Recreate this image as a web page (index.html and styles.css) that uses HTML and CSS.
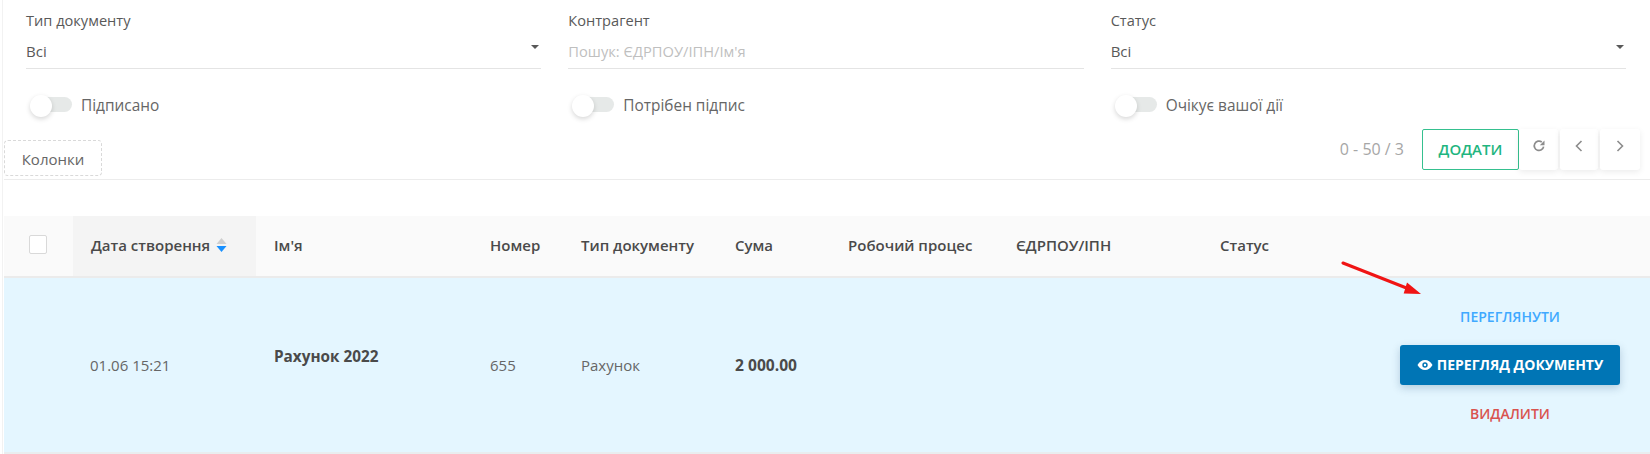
FILE: index.html
```html
<!DOCTYPE html>
<html lang="uk">
<head>
<meta charset="utf-8">
<title>Документи</title>
<link rel="stylesheet" href="styles.css">
</head>
<body>
<main class="page">
  <section class="filters">
    <div class="field">
      <div class="field-label">Тип документу</div>
      <div class="field-control"><span>Всі</span><span class="caret"></span></div>
      <div class="toggle-row"><span class="toggle"><span class="knob"></span></span><span class="toggle-text">Підписано</span></div>
    </div>
    <div class="field">
      <div class="field-label">Контрагент</div>
      <div class="field-control placeholder"><span>Пошук: ЄДРПОУ/ІПН/Ім'я</span></div>
      <div class="toggle-row"><span class="toggle"><span class="knob"></span></span><span class="toggle-text">Потрібен підпис</span></div>
    </div>
    <div class="field">
      <div class="field-label">Статус</div>
      <div class="field-control"><span>Всі</span><span class="caret"></span></div>
      <div class="toggle-row"><span class="toggle"><span class="knob"></span></span><span class="toggle-text">Очікує вашої дії</span></div>
    </div>
  </section>

  <section class="toolbar">
    <button class="columns-btn">Колонки</button>
    <div class="toolbar-right">
      <span class="range">0 - 50 / 3</span>
      <button class="add-btn">ДОДАТИ</button>
      <button class="icon-btn icon-btn-first" aria-label="Оновити">
        <svg width="14" height="14" viewBox="0 0 14 14"><path d="M11.6 7.6A4.7 4.7 0 1 1 9.8 3" fill="none" stroke="#8c8c8c" stroke-width="1.7"/><path d="M12.500 1.500v4.700H7.800z" fill="#8c8c8c"/></svg>
      </button>
      <button class="icon-btn icon-btn-mid" aria-label="Назад">
        <svg width="10" height="14" viewBox="0 0 10 14"><path d="M7.5 2 2.5 7l5 5" fill="none" stroke="#8c8c8c" stroke-width="1.6"/></svg>
      </button>
      <button class="icon-btn icon-btn-last" aria-label="Вперед">
        <svg width="10" height="14" viewBox="0 0 10 14"><path d="M2.5 2l5 5-5 5" fill="none" stroke="#8c8c8c" stroke-width="1.6"/></svg>
      </button>
    </div>
  </section>

  <table class="docs">
    <colgroup>
      <col class="c-check"><col class="c-date"><col class="c-name"><col class="c-num"><col class="c-type"><col class="c-sum"><col class="c-flow"><col class="c-code"><col class="c-status"><col class="c-actions">
    </colgroup>
    <thead>
      <tr>
        <th class="check-cell"><span class="checkbox"></span></th>
        <th class="sorted"><span class="sort-head">Дата створення
          <svg class="sort-icon" width="11" height="16" viewBox="0 0 11 16"><path d="M5.500 1l5 6H.5z" fill="#cfcfcf"/><path d="M5.500 15 .5 9h10z" fill="#1890ff"/></svg>
        </span></th>
        <th>Ім'я</th>
        <th>Номер</th>
        <th>Тип документу</th>
        <th>Сума</th>
        <th>Робочий процес</th>
        <th>ЄДРПОУ/ІПН</th>
        <th>Статус</th>
        <th></th>
      </tr>
    </thead>
    <tbody>
      <tr>
        <td></td>
        <td class="date-cell">01.06 15:21</td>
        <td class="strong name-cell">Рахунок 2022</td>
        <td>655</td>
        <td>Рахунок</td>
        <td class="strong sum-cell">2 000.00</td>
        <td></td>
        <td></td>
        <td></td>
        <td class="actions">
          <div class="actions-stack">
            <a class="link link-view">ПЕРЕГЛЯНУТИ</a>
            <button class="primary-btn">
              <svg width="16" height="12" viewBox="0 0 16 12"><path d="M0.5 6C2.5 2.6 5 1 8 1s5.500 1.600 7.500 5c-2 3.400-4.500 5-7.500 5S2.500 9.400.5 6z" fill="#fff"/><circle cx="8" cy="6" r="2.700" fill="#0075b5"/><circle cx="8" cy="6" r="1.200" fill="#fff"/></svg>
              ПЕРЕГЛЯД ДОКУМЕНТУ
            </button>
            <a class="link link-del">ВИДАЛИТИ</a>
          </div>
        </td>
      </tr>
    </tbody>
  </table>

  <svg class="arrow" width="84" height="38" viewBox="0 0 84 38"><path d="M2 3 68 29" stroke="#f01414" stroke-width="3" stroke-linecap="round" fill="none"/><path d="M80 34 62.700 33.500 66 22.500z" fill="#f01414"/></svg>
</main>
</body>
</html>
```
FILE: styles.css
```css
* { box-sizing: border-box; }
html, body { margin: 0; padding: 0; }
body {
  background: #fff;
  color: #666;
  font-family: "Open Sans", "Noto Sans", sans-serif;
  font-size: 15px;
  line-height: 20px;
  height: 454px;
  overflow: hidden;
}
button { font-family: inherit; cursor: pointer; }

.page {
  position: relative;
  margin-left: 2px;
  padding-left: 1px;
  height: 454px;
  border-left: 1px solid #f2f2f2;
}

.filters {
  display: grid;
  grid-template-columns: repeat(3, 1fr);
  column-gap: 27px;
  padding: 10px 24px 0 22px;
}
.field-label { height: 20px; color: #595959; font-size: 14.6px; }
.field-control {
  display: flex;
  justify-content: space-between;
  align-items: center;
  height: 39px;
  padding-top: 4px;
  border-bottom: 1px solid #e4e4e4;
  color: #595959;
}
.field-control.placeholder { color: #bfbfbf; font-size: 14.7px; }
.caret {
  width: 0;
  height: 0;
  margin: 0 2px 8px 0;
  border-left: 4px solid transparent;
  border-right: 4px solid transparent;
  border-top: 4px solid #595959;
}
.toggle-row {
  display: flex;
  align-items: center;
  gap: 9px;
  height: 24px;
  margin-top: 23px;
  padding-left: 10px;
  font-size: 15.400px;
}
.toggle-text { padding-top: 3px; }
.toggle {
  position: relative;
  display: block;
  width: 36px;
  height: 15px;
  border-radius: 8px;
  background: #e6e9e8;
}
.knob {
  position: absolute;
  left: -6px;
  top: -2px;
  width: 22px;
  height: 22px;
  border-radius: 50%;
  background: #fff;
  box-shadow: 0 2px 5px rgba(0, 0, 0, .16);
}

.toolbar {
  display: flex;
  justify-content: space-between;
  align-items: flex-start;
  height: 51px;
  margin-top: 13px;
  padding: 0 10px 0 0;
  border-bottom: 1px solid #ececec;
}
.columns-btn {
  width: 98px;
  height: 36px;
  margin-top: 11px;
  padding: 2px 0 0;
  border: 1px dashed #d9d9d9;
  border-radius: 4px;
  background: #fff;
  color: #666;
  font-size: 15px;
}
.toolbar-right { display: flex; align-items: center; height: 41px; }
.range { margin-right: 18px; padding-bottom: 2px; color: #a6a6a6; font-size: 16px; }
.add-btn {
  width: 97px;
  height: 41px;
  padding: 0 0 2px;
  border: 1.5px solid #35c08f;
  border-radius: 2px;
  background: #fff;
  color: #1fb57f;
  font-size: 15px;
  font-weight: 600;
}
.icon-btn {
  display: flex;
  align-items: center;
  justify-content: center;
  height: 41px;
  padding: 0 0 7px;
  border: 0;
  border-radius: 3px;
  background: #fff;
  box-shadow: 0 2px 6px rgba(0, 0, 0, .08);
}
.icon-btn-first { width: 39px; }
.icon-btn-mid { width: 38px; margin-left: 2px; }
.icon-btn-last { width: 40px; margin-left: 2px; }

.docs {
  width: 100%;
  margin-top: 36px;
  border-collapse: separate;
  border-spacing: 0;
  table-layout: fixed;
}
.c-check { width: 69px; }
.c-date { width: 183px; }
.c-name { width: 216px; }
.c-num { width: 91px; }
.c-type { width: 154px; }
.c-sum { width: 113px; }
.c-flow { width: 168px; }
.c-code { width: 204px; }
.c-status { width: 150px; }

.docs th {
  height: 62px;
  padding: 0 0 3px 18px;
  background: #fafafa;
  border-bottom: 2px solid #ebebeb;
  color: #4a4a4a;
  font-weight: 600;
  text-align: left;
  white-space: nowrap;
}
.docs th.check-cell { padding: 0 0 4px 25px; }
.docs th.sorted { background: #f4f4f4; }
.checkbox {
  display: block;
  width: 18px;
  height: 19px;
  border: 1px solid #d9d9d9;
  border-radius: 2px;
  background: #fff;
}
.sort-head { display: inline-flex; align-items: center; gap: 6px; }
.sort-icon { display: block; }

.docs td {
  height: 176px;
  padding: 0 0 0 18px;
  background: #e4f6ff;
  border-bottom: 2px solid #e9edef;
  vertical-align: middle;
  white-space: nowrap;
}
.docs td.date-cell { padding-left: 17px; }
.docs td.strong { color: #4a4a4a; font-weight: 700; }
.docs td.sum-cell { font-size: 15.600px; }
.docs td.name-cell { padding-bottom: 19px; font-size: 15.300px; }
.docs td.actions { padding: 0; }
.actions-stack {
  display: flex;
  flex-direction: column;
  align-items: center;
  width: 220px;
  margin-left: 48px;
}
.link { font-size: 14px; font-weight: 600; line-height: 20px; }
.link-view { color: #40a9ff; margin-bottom: 18px; }
.link-del { color: #d9534f; margin-top: 19px; }
.primary-btn {
  display: flex;
  align-items: center;
  justify-content: center;
  gap: 4px;
  width: 220px;
  height: 40px;
  padding: 0;
  border: 0;
  border-radius: 3px;
  background: #0075b5;
  color: #fff;
  font-size: 14px;
  font-weight: 700;
  box-shadow: 0 3px 8px rgba(0, 60, 100, .22);
}
.arrow { position: absolute; left: 1338px; top: 260px; }
```
